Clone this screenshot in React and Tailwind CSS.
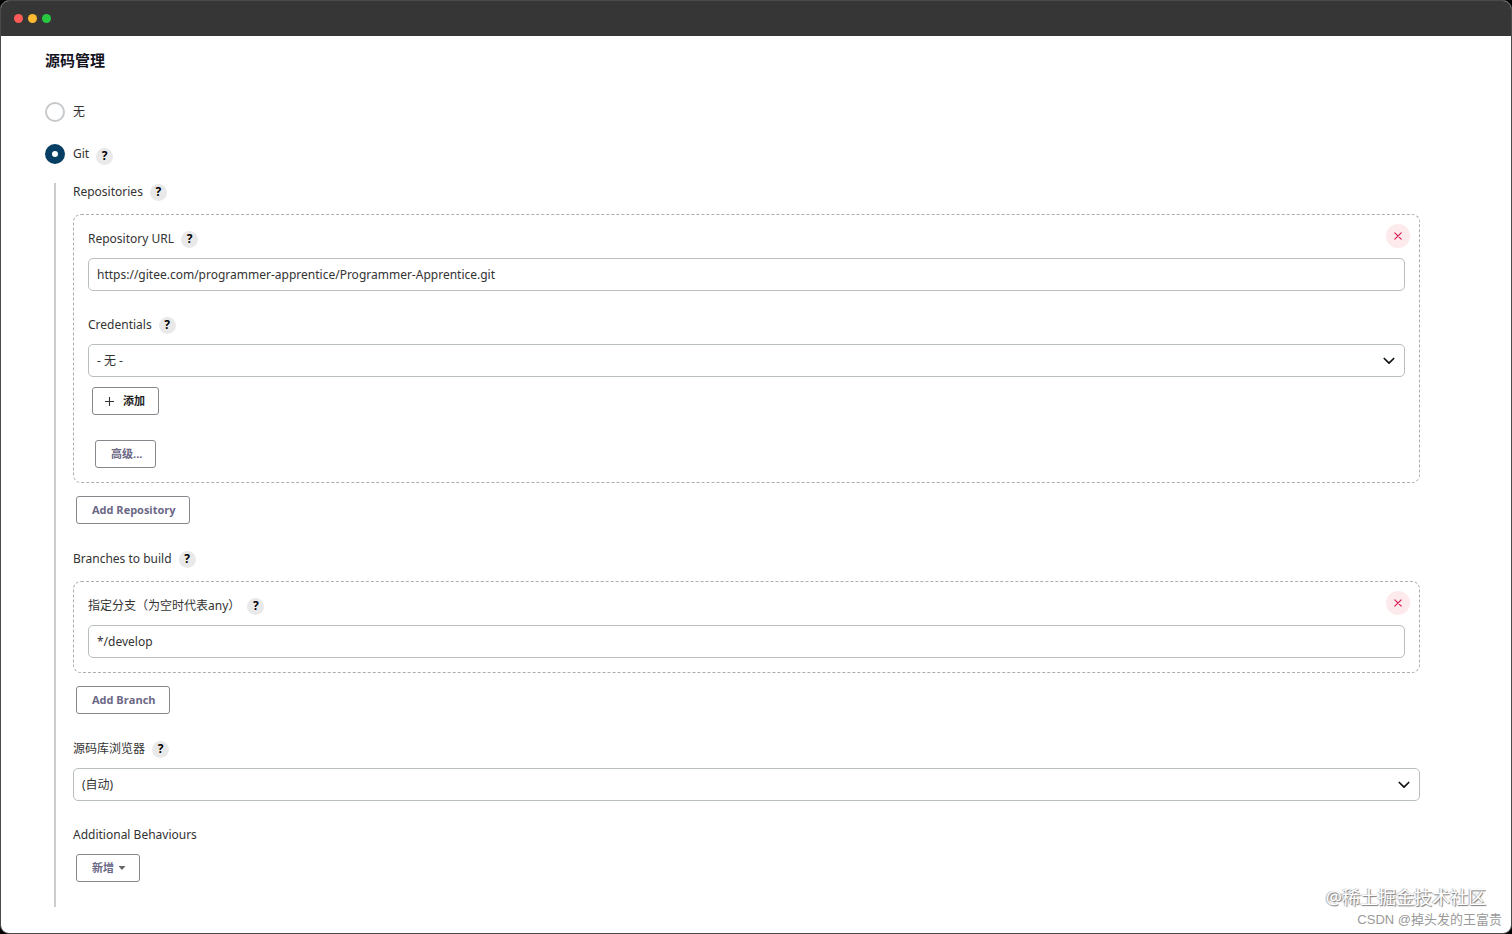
import React, { useState } from 'react';

const HelpButton = ({ topic, className = '' }) => (
  <button
    type="button"
    aria-label={`Help for feature: ${topic}`}
    className={`flex h-[17px] w-[17px] shrink-0 items-center justify-center rounded-full bg-[#e9e9e9] text-xs leading-none font-bold text-black hover:bg-gray-300 ${className}`}
  >
    ?
  </button>
);

const FieldLabel = ({ htmlFor, children, help = true, topic }) => (
  <div className="flex h-[18px] items-center gap-[7px]">
    <label htmlFor={htmlFor} className="whitespace-nowrap">{children}</label>
    {help && <HelpButton topic={topic || children} />}
  </div>
);

const TextInput = ({ id, value, onChange }) => (
  <input
    id={id}
    type="text"
    value={value}
    onChange={(e) => onChange(e.target.value)}
    className="mt-[10px] block h-[33px] w-full rounded-[5px] border border-[#b8bdc0] bg-white px-2 text-xs outline-none focus:border-[#0b6aa2]"
  />
);

const SelectInput = ({ id, options }) => (
  <div className="relative mt-[10px]">
    <select
      id={id}
      className="block h-[33px] w-full appearance-none rounded-[5px] border border-[#b8bdc0] bg-white px-2 text-xs outline-none focus:border-[#0b6aa2]"
    >
      {options.map((o) => (
        <option key={o}>{o}</option>
      ))}
    </select>
    <svg viewBox="0 0 12 8" className="pointer-events-none absolute top-[13px] right-[10px] h-2 w-3" fill="none" stroke="#111" strokeWidth="1.7" strokeLinecap="round" strokeLinejoin="round">
      <path d="M1.3 1.5 6 6.2l4.7-4.7" />
    </svg>
  </div>
);

const Button = ({ children, className = 'text-[#6b6785]' }) => (
  <button
    type="button"
    className={`flex h-7 items-center rounded-[3px] border border-[#85898d] bg-white pr-[13px] pl-[15px] font-['Open_Sans','Noto_Sans_CJK_SC',sans-serif] text-[11px] font-bold hover:bg-gray-50 ${className}`}
  >
    {children}
  </button>
);

const Chunk = ({ children }) => (
  <div className="relative mt-[13px] rounded-lg border border-dashed border-[#a9aeb1] px-[14px] pt-[15px] pb-[14px]">
    <button
      type="button"
      aria-label="Delete"
      className="absolute top-[9px] right-[9px] flex h-6 w-6 items-center justify-center rounded-full bg-[#fdeaec] hover:bg-red-100"
    >
      <svg viewBox="0 0 8 8" className="h-2 w-2" fill="none" stroke="#d6184a" strokeWidth="1.1" strokeLinecap="round">
        <path d="M.8.8l6.4 6.4M7.2.8.8 7.2" />
      </svg>
    </button>
    {children}
  </div>
);

const RadioRow = ({ id, value, checked, onSelect, children }) => (
  <div className="flex h-5 items-center">
    <input
      id={id}
      type="radio"
      name="scm"
      value={value}
      checked={checked}
      onChange={() => onSelect(value)}
      className="h-5 w-5 shrink-0 appearance-none rounded-full border-2 border-[#c6cacc] bg-white checked:border-[7px] checked:border-[#063f63]"
    />
    {children}
  </div>
);

export default function App() {
  const [scm, setScm] = useState('git');
  const [url, setUrl] = useState('https://gitee.com/programmer-apprentice/Programmer-Apprentice.git');
  const [branch, setBranch] = useState('*/develop');

  return (
    <div className="flex min-h-screen bg-black font-['Noto_Sans','Noto_Sans_CJK_SC',sans-serif] text-xs leading-[18px] text-[#333]">
      <div className="relative flex w-full flex-col overflow-hidden rounded-[9px] border border-[#4a4a4a] bg-white">
        <header className="flex h-[35px] items-center gap-[5px] bg-[#363636] pl-[13px]">
          <span className="h-[9px] w-[9px] rounded-full bg-[#fc5b57]" />
          <span className="h-[9px] w-[9px] rounded-full bg-[#fdb92f]" />
          <span className="h-[9px] w-[9px] rounded-full bg-[#28c840]" />
        </header>

        <main className="pt-3 pr-[91px] pb-5 pl-11">
          <h2 className="text-[15px] leading-6 font-bold text-[#14141f]">源码管理</h2>

          <div className="mt-[30px]">
            <RadioRow id="scm-none" value="none" checked={scm === 'none'} onSelect={setScm}>
              <label htmlFor="scm-none" className="pl-2">无</label>
            </RadioRow>
          </div>
          <div className="mt-[22px]">
            <RadioRow id="scm-git" value="git" checked={scm === 'git'} onSelect={setScm}>
              <label htmlFor="scm-git" className="pl-2">Git</label>
              <HelpButton topic="Git" className="mt-1 ml-[7px]" />
            </RadioRow>
          </div>

          <div className="mt-[19px] ml-[9px] border-l-2 border-[#cdcdcd] pb-[25px] pl-[17px]">
            <section>
              <FieldLabel>Repositories</FieldLabel>
              <Chunk>
                <FieldLabel htmlFor="repo-url">Repository URL</FieldLabel>
                <TextInput id="repo-url" value={url} onChange={setUrl} />
                <div className="mt-[25px]">
                  <FieldLabel htmlFor="credentials">Credentials</FieldLabel>
                  <SelectInput id="credentials" options={['- 无 -']} />
                </div>
                <div className="mt-[10px] flex pl-1">
                  <Button className="gap-[9px] text-[#222]">
                    <svg viewBox="0 0 9 9" className="-ml-[3px] h-[9px] w-[9px]" fill="none" stroke="#333" strokeWidth="1.1">
                      <path d="M4.5 0v9M0 4.5h9" />
                    </svg>
                    添加
                  </Button>
                </div>
                <div className="mt-[25px] flex pl-[7px]">
                  <Button>高级...</Button>
                </div>
              </Chunk>
              <div className="mt-[13px] flex pl-[3px]">
                <Button>Add Repository</Button>
              </div>
            </section>

            <section className="mt-[26px]">
              <FieldLabel>Branches to build</FieldLabel>
              <Chunk>
                <FieldLabel htmlFor="branch" topic="指定分支">指定分支（为空时代表any）</FieldLabel>
                <TextInput id="branch" value={branch} onChange={setBranch} />
              </Chunk>
              <div className="mt-[13px] flex pl-[3px]">
                <Button>Add Branch</Button>
              </div>
            </section>

            <section className="mt-[26px]">
              <FieldLabel htmlFor="browser">源码库浏览器</FieldLabel>
              <SelectInput id="browser" options={['(自动)']} />
            </section>

            <section className="mt-[25px]">
              <FieldLabel help={false}>Additional Behaviours</FieldLabel>
              <div className="mt-[10px] flex pl-[3px]">
                <Button className="gap-1 text-[#6b6785]">
                  新增
                  <svg viewBox="0 0 8 4" className="h-1 w-2" fill="#666">
                    <path d="M.5 0h7L4 4z" />
                  </svg>
                </Button>
              </div>
            </section>
          </div>
        </main>

        <div className="pointer-events-none absolute right-[9px] bottom-0.5 flex flex-col items-end">
          <span className="pr-4 text-lg leading-6 text-white [text-shadow:1px_1px_1px_#777,-1px_0_1px_#aaa]">@稀土掘金技术社区</span>
          <span className="font-['Liberation_Sans','Noto_Sans_CJK_SC',sans-serif] text-[13px] leading-[22px] text-[#9a9a9a]">CSDN @掉头发的王富贵</span>
        </div>
      </div>
    </div>
  );
}
